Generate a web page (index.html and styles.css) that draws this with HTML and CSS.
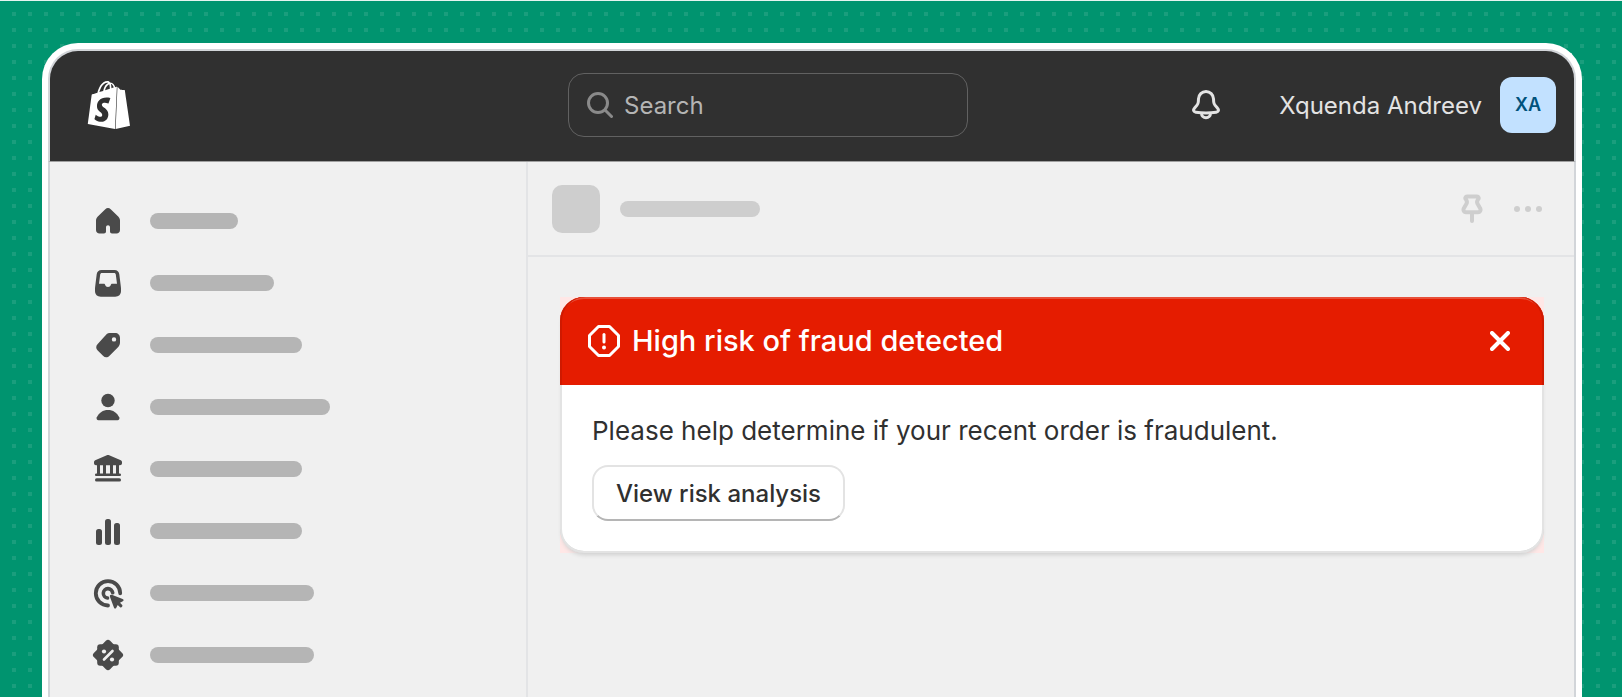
FILE: index.html
```html
<!DOCTYPE html>
<html lang="en">
<head>
    <meta charset="UTF-8">
    <meta name="viewport" content="width=device-width, initial-scale=1.0">
    <title>High risk of fraud detected</title>
    <link rel="stylesheet" href="styles.css">
</head>
<body>
    <div class="window">
        <header class="topbar">
            <a class="logo" href="#" aria-label="Shopify">
                <svg width="48" height="48" viewBox="0 0 24 24" fill="#fff">
                    <path d="M15.337 23.979l7.216-1.561s-2.604-17.613-2.625-17.73c-.018-.116-.114-.192-.211-.192s-1.929-.136-1.929-.136-1.275-1.274-1.439-1.411c-.045-.037-.075-.057-.121-.074l-.914 21.104h.023zM11.71 11.305s-.81-.424-1.774-.424c-1.447 0-1.504.906-1.504 1.141 0 1.232 3.24 1.715 3.24 4.629 0 2.295-1.44 3.76-3.406 3.76-2.354 0-3.54-1.465-3.54-1.465l.646-2.086s1.245 1.066 2.28 1.066c.675 0 .975-.545.975-.932 0-1.619-2.654-1.694-2.654-4.359-.034-2.237 1.571-4.416 4.827-4.416 1.257 0 1.875.361 1.875.361l-.945 2.715-.02.01zM11.17.83c.136 0 .271.038.405.135-.984.465-2.064 1.639-2.508 3.992-.656.213-1.293.405-1.889.578C7.697 3.75 8.951.84 11.17.84V.83zm1.235 2.949v.135c-.754.232-1.583.484-2.394.736.466-1.777 1.333-2.645 2.085-2.971.193.501.309 1.176.309 2.1zm.539-2.234c.694.074 1.141.867 1.429 1.755-.349.114-.735.231-1.158.366v-.252c0-.752-.096-1.371-.271-1.871v.002zm2.992 1.289c-.02 0-.06.021-.078.021s-.289.075-.714.21c-.423-1.233-1.176-2.37-2.508-2.37h-.115C12.135.209 11.669 0 11.265 0 8.159 0 6.675 3.877 6.21 5.846c-1.194.365-2.063.636-2.16.674-.675.213-.694.232-.772.87-.075.462-1.83 14.063-1.83 14.063L15.009 24l.927-21.166z"/>
                </svg>
            </a>
            <label class="search">
                <svg width="26" height="26" viewBox="0 0 26 26" fill="none" stroke="#8a8a8a" stroke-width="3" stroke-linecap="round">
                    <circle cx="11" cy="11" r="9.5"/>
                    <path d="M18 18l6.5 6.5"/>
                </svg>
                <input type="text" placeholder="Search" aria-label="Search">
            </label>
            <button class="icon-button bell" aria-label="Notifications">
                <svg width="28" height="30" viewBox="0 0 28 30" fill="none" stroke="#e3e3e3" stroke-width="3" stroke-linejoin="round">
                    <path d="M14 1.5c-4.200 0-7.300 3.200-7.500 7.300l-.2 3.200c-.1 1.300-.6 2.400-1.500 3.400l-2.400 2.900c-1.600 1.800-.8 3.600 1.400 3.900 2.800.4 6.200.7 10.200.7s7.400-.3 10.200-.7c2.200-.3 3-2.100 1.400-3.900l-2.400-2.900c-.9-1-1.400-2.100-1.500-3.400l-.2-3.200c-.2-4.100-3.300-7.300-7.500-7.300z"/>
                    <path d="M9.500 23c0 3 2 4.800 4.500 4.800s4.500-1.800 4.500-4.800"/>
                </svg>
            </button>
            <button class="account">
                <span class="account-name">Xquenda Andreev</span>
                <span class="avatar">XA</span>
            </button>
        </header>

        <div class="layout">
            <nav class="sidebar" aria-label="Main">
                <a class="nav-item" href="#" aria-label="Home">
                    <svg width="40" height="40" viewBox="0 0 40 40">
                        <path d="M17.300 8.200c1.600-1.500 3.800-1.500 5.400 0l7.500 7.200c1.200 1.100 1.800 2.600 1.800 4.200v9.400c0 2-1.500 3.500-3.500 3.500h-4.500c-1.100 0-2-.9-2-2v-4.200c0-1.100-.9-2-2-2s-2 .9-2 2v4.200c0 1.100-.9 2-2 2h-4.500c-2 0-3.500-1.500-3.500-3.500v-9.400c0-1.600.6-3.100 1.800-4.200z"/>
                    </svg>
                    <span class="bar bar-88"></span>
                </a>
                <a class="nav-item" href="#" aria-label="Orders">
                    <svg width="40" height="40" viewBox="0 0 40 40">
                        <path fill-rule="evenodd" d="M13.500 7h13c2.700 0 4.500 1.700 4.800 4.300l1.500 12c.1.800.2 1.500.2 2.300v2.400c0 3.500-2.300 5.700-5.800 5.700h-14.400c-3.500 0-5.800-2.200-5.800-5.700v-2.400c0-.8.1-1.500.2-2.300l1.500-12c.3-2.600 2.100-4.300 4.800-4.300zM14 10c-1.100 0-1.700.6-1.800 1.600l-1.200 9.100h4.700c.8 0 1.300.5 1.500 1.300.4 1.300 1.300 2 2.800 2s2.400-.7 2.800-2c.2-.8.7-1.300 1.500-1.300h4.700l-1.200-9.100c-.1-1-.7-1.600-1.800-1.600z"/>
                    </svg>
                    <span class="bar bar-124"></span>
                </a>
                <a class="nav-item" href="#" aria-label="Products">
                    <svg width="40" height="40" viewBox="0 0 40 40">
                        <path fill-rule="evenodd" d="M21.500 8h5.500c3 0 5 2 5 5v4.500c0 1.900-.7 3.400-2 4.700l-8.500 8.600c-2 2-4.500 2-6.500 0l-5.300-5.400c-2-2-2-4.500 0-6.500l7-7.600c1.300-1.500 2.700-3.300 4.800-3.300zM26 12.200a2.200 2.200 0 1 0 0 4.400a2.200 2.200 0 1 0 0-4.400z"/>
                    </svg>
                    <span class="bar bar-152"></span>
                </a>
                <a class="nav-item" href="#" aria-label="Customers">
                    <svg width="40" height="40" viewBox="0 0 40 40">
                        <circle cx="20" cy="13.500" r="6.700"/>
                        <path d="M20 23c5 0 9 2.600 11.200 7.300.7 1.600-.1 3-1.700 3h-19c-1.600 0-2.400-1.400-1.700-3C11 25.600 15 23 20 23z"/>
                    </svg>
                    <span class="bar bar-180"></span>
                </a>
                <a class="nav-item" href="#" aria-label="Finances">
                    <svg width="40" height="40" viewBox="0 0 40 40">
                        <path fill-rule="evenodd" d="M18.800 6.300c.8-.4 1.600-.4 2.400 0l11.600 5c.8.4 1.200 1 1.200 1.800v1.100c0 1.200-.9 2-2 2h-1v8.300h.7c.8 0 1.300.6 1.300 1.300s-.5 1.300-1.300 1.300h-23.400c-.8 0-1.300-.6-1.300-1.300s.5-1.300 1.300-1.300h.7v-8.300h-1c-1.100 0-2-.8-2-2v-1.100c0-.8.4-1.400 1.200-1.800zM12 16.200v8.300h3v-8.300zM18 16.200v8.300h4v-8.300zM25 16.200v8.300h3v-8.300z"/>
                        <rect x="7" y="29.300" width="26" height="3.300" rx="1.600"/>
                    </svg>
                    <span class="bar bar-152"></span>
                </a>
                <a class="nav-item" href="#" aria-label="Analytics">
                    <svg width="40" height="40" viewBox="0 0 40 40">
                        <rect x="8" y="18" width="6" height="16" rx="2.500"/>
                        <rect x="17" y="8" width="6" height="26" rx="2.500"/>
                        <rect x="26" y="12" width="6" height="22" rx="2.500"/>
                    </svg>
                    <span class="bar bar-152"></span>
                </a>
                <a class="nav-item" href="#" aria-label="Marketing">
                    <svg width="40" height="40" viewBox="0 0 40 40">
                        <g fill="none" stroke="#4a4a4a" stroke-linecap="round">
                            <path stroke-width="3.800" d="M32.200 20.300a12.200 12.200 0 1 0-12.200 12.200"/>
                            <path stroke-width="3.600" d="M24.700 19.800a4.700 4.700 0 1 0-5.200 5.200"/>
                        </g>
                        <path d="M23.800 21.800l10.800 4.200c1.300.5 1.300 1.600.2 2.200l-2.800 1.600 2.200 2.200c1 1-.9 3.200-2.100 2.200l-2.400-2.200-1.400 2.700c-.6 1.200-1.800 1.200-2.300 0l-4-10.800c-.5-1.500.4-2.500 1.800-1.900z"/>
                    </svg>
                    <span class="bar bar-164"></span>
                </a>
                <a class="nav-item" href="#" aria-label="Discounts">
                    <svg width="40" height="40" viewBox="0 0 40 40">
                        <rect x="9.200" y="9.200" width="21.600" height="21.600" rx="3"/>
                        <rect x="8.500" y="8.500" width="23" height="23" rx="3" transform="rotate(45 20 20)"/>
                        <g fill="#f0f0f0">
                            <circle cx="16" cy="16.500" r="2.100"/>
                            <circle cx="24" cy="24.500" r="2.100"/>
                            <path stroke="#f0f0f0" stroke-width="2.600" stroke-linecap="round" d="M16 24.500l8.500-8.500"/>
                        </g>
                    </svg>
                    <span class="bar bar-164"></span>
                </a>
            </nav>

            <main class="content">
                <div class="app-bar">
                    <span class="app-icon"></span>
                    <span class="app-title"></span>
                    <button class="icon-button pin" aria-label="Pin">
                        <svg width="22" height="30" viewBox="0 0 22 30" fill="none" stroke="#cecece" stroke-width="4" stroke-linecap="round" stroke-linejoin="round">
                            <path d="M6 2.500h10c1.500 0 2.200 1.600 1.200 2.700-1.600 1.900-1.600 3.800.2 6.100l1.400 2.300c1.400 2 .7 4.700-1.900 4.700h-11.800c-2.600 0-3.300-2.700-1.900-4.700l1.400-2.300c1.800-2.300 1.800-4.200.2-6.100-1-1.100-.3-2.700 1.200-2.700z"/>
                            <path d="M11 20v7"/>
                        </svg>
                    </button>
                    <button class="icon-button more" aria-label="More actions">
                        <svg width="28" height="8" viewBox="0 0 28 8" fill="#cecece">
                            <circle cx="3" cy="4" r="3"/>
                            <circle cx="14" cy="4" r="3"/>
                            <circle cx="25" cy="4" r="3"/>
                        </svg>
                    </button>
                </div>

                <div class="banner-wrap">
                    <section class="banner">
                        <div class="banner-head">
                            <svg width="32" height="32" viewBox="0 0 32 32" fill="none" stroke="#fff" stroke-width="3" stroke-linejoin="round" stroke-linecap="round">
                                <path d="M10.500 1.500h11l9 9v11l-9 9h-11l-9-9v-11z"/>
                                <path d="M16 9.500v7.500"/>
                                <circle cx="16" cy="22.500" r="2" fill="#fff" stroke="none"/>
                            </svg>
                            <h1>High risk of fraud detected</h1>
                            <button class="icon-button" aria-label="Dismiss">
                                <svg width="20" height="20" viewBox="0 0 20 20" stroke="#fff" stroke-width="4" stroke-linecap="round">
                                    <path d="M2 2l16 16M18 2L2 18"/>
                                </svg>
                            </button>
                        </div>
                        <div class="banner-body">
                            <p>Please help determine if your recent order is fraudulent.</p>
                            <button class="button">View risk analysis</button>
                        </div>
                    </section>
                </div>
            </main>
        </div>
    </div>
</body>
</html>
```
FILE: styles.css
```css
* {
    box-sizing: border-box;
}

body {
    margin: 0;
    min-height: 100vh;
    display: flex;
    padding: 42px 40px 0 42px;
    border-top: 1px solid #e6f4f0;
    background-color: #00946f;
    /* small square dots on a 16px grid */
    background-image: conic-gradient(from 270deg at 4px 4px, #1a9e7d 90deg, transparent 0);
    background-size: 16px 16px;
    background-position: 12px 12px;
    font-family: Inter, "Liberation Sans", sans-serif;
    color: #303030;
}

button {
    font-family: inherit;
    cursor: pointer;
}

.window {
    flex: 1;
    display: flex;
    flex-direction: column;
    border: 6px solid #ffffff;
    border-bottom: none;
    border-radius: 36px 36px 0 0;
    background-color: #ffffff;
}

.topbar {
    display: flex;
    align-items: center;
    height: 113px;
    padding: 0 18px 2px 0;
    border: 2px solid #d2d5d9;
    border-bottom: 1px solid #a0a0a0;
    border-radius: 30px 30px 0 0;
    background-color: #303030;
}

.logo {
    display: flex;
    width: 478px;
    padding-left: 35px;
}

.search {
    display: flex;
    align-items: center;
    gap: 11px;
    width: 400px;
    height: 64px;
    margin-left: 40px;
    padding: 0 18px;
    border: 1px solid #616161;
    border-radius: 16px;
}

.search input {
    flex: 1;
    min-width: 0;
    padding: 0;
    border: none;
    outline: none;
    background: none;
    font-family: inherit;
    font-size: 24px;
    color: #e3e3e3;
}

.search input::placeholder {
    color: #b5b5b5;
    opacity: 1;
}

.icon-button {
    display: flex;
    padding: 0;
    border: none;
    background: none;
}

.bell {
    margin-left: auto;
}

.account {
    display: flex;
    align-items: center;
    gap: 18px;
    margin-left: 59px;
    padding: 0;
    border: none;
    background: none;
    color: #e3e3e3;
}

.account-name {
    font-size: 24px;
    font-weight: 400;
}

.avatar {
    width: 56px;
    height: 56px;
    border-radius: 12px;
    background-color: #c2e1ff;
    color: #00527c;
    font-size: 18px;
    font-weight: 600;
    line-height: 56px;
    text-align: center;
}

.layout {
    flex: 1;
    display: flex;
    border: 2px solid #d2d5d9;
    border-width: 0 2px;
    background-color: #f0f0f0;
}

.sidebar {
    width: 478px;
    padding: 39px 38px 0;
    border-right: 2px solid #e3e4e6;
}

.nav-item {
    display: flex;
    align-items: center;
    gap: 22px;
    height: 40px;
    margin-bottom: 22px;
    fill: #4a4a4a;
}

.nav-item:last-child {
    margin-bottom: 0;
}

.bar {
    height: 16px;
    border-radius: 8px;
    background-color: #b5b5b5;
}

.bar-88 {
    width: 88px;
}

.bar-124 {
    width: 124px;
}

.bar-152 {
    width: 152px;
}

.bar-164 {
    width: 164px;
}

.bar-180 {
    width: 180px;
}

.content {
    flex: 1;
}

.app-bar {
    display: flex;
    align-items: center;
    height: 95px;
    padding: 0 32px 0 24px;
    border-bottom: 2px solid #e3e4e6;
}

.app-icon {
    width: 48px;
    height: 48px;
    border-radius: 10px;
    background-color: #cecece;
}

.app-title {
    width: 140px;
    height: 16px;
    margin-left: 20px;
    border-radius: 8px;
    background-color: #cecece;
}

.pin {
    margin-left: auto;
}

.more {
    margin-left: 31px;
}

.banner-wrap {
    margin: 40px 30px 0 32px;
    background-color: #ffe7e6;
}

.banner {
    border-radius: 24px;
    background-color: #ffffff;
    box-shadow: inset 0 0 0 2px #e3e3e3, inset 0 -1px 0 1px #cccccc, 0 4px 4px -2px #cfcfcf;
}

.banner-head {
    display: flex;
    align-items: center;
    gap: 12px;
    height: 88px;
    padding: 0 34px 0 28px;
    border-radius: 24px 24px 0 0;
    background-color: #e51c00;
    box-shadow: inset 2px 0 0 #cf1900, inset -2px 0 0 #cf1900, inset 0 2px 0 #e8503a;
    color: #ffffff;
}

.banner-head h1 {
    flex: 1;
    margin: 0;
    font-size: 29px;
    font-weight: 500;
    line-height: 40px;
}

.banner-body {
    padding: 26px 32px 32px;
}

.banner-body p {
    margin: 0 0 14px;
    font-size: 26px;
    line-height: 40px;
}

.button {
    display: block;
    height: 56px;
    padding: 0 22px;
    border: 2px solid #e3e3e3;
    border-bottom-color: #b5b5b5;
    border-radius: 16px;
    background-color: #ffffff;
    font-size: 24px;
    font-weight: 500;
    color: #303030;
}
```
